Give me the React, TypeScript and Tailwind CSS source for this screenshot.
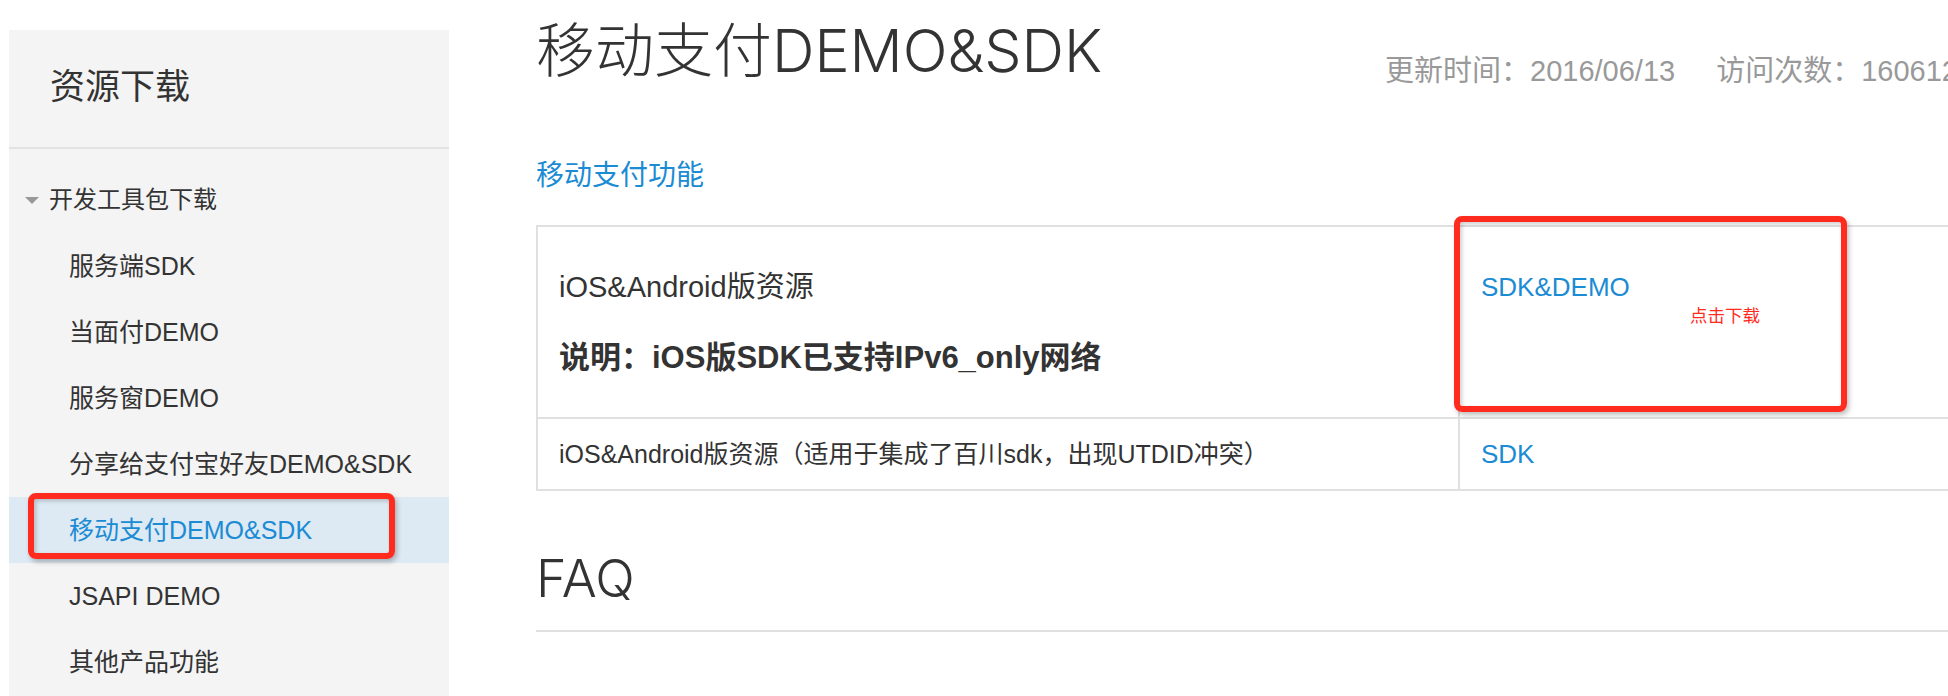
const sans = "font-['Liberation_Sans','Noto_Sans_CJK_SC',sans-serif]"
const light = "font-['Inter','Noto_Sans_CJK_SC',sans-serif] font-light"
const redBox = "absolute border-[6px] border-[#ff2b1e] rounded-[8px] shadow-[2px_3px_5px_rgba(0,0,0,0.25),inset_2px_2px_4px_rgba(0,0,0,0.2)]"

const items = [
    "服务端SDK",
    "当面付DEMO",
    "服务窗DEMO",
    "分享给支付宝好友DEMO&SDK",
    "移动支付DEMO&SDK",
    "JSAPI DEMO",
    "其他产品功能",
]

const Sidebar = () => {
    return (
        <aside className="ml-[9px] mt-[30px] w-[440px] shrink-0 bg-[#f4f4f4] text-[#333]">
            <div className="h-[117px] flex items-center pl-[41px] pb-[4px]">
                <h2 className="text-[35px] leading-none">资源下载</h2>
            </div>
            <div className="h-[2px] bg-[#e2e2e2]" />
            <div className="pt-[18px] pb-[40px]">
                <div className="h-[66px] flex items-center pl-[16px] gap-[6px]">
                    <span className="w-0 h-0 border-l-[7px] border-r-[7px] border-t-[7px] border-l-transparent border-r-transparent border-t-[#999]" />
                    <span className="text-[24px] leading-none ml-[4px]">开发工具包下载</span>
                </div>
                {items.map((item) => {
                    const active = item === "移动支付DEMO&SDK"
                    return (
                        <div
                            key={item}
                            className={
                                active
                                    ? "relative h-[66px] flex items-center pl-[60px] bg-[#dde9f3] text-[#1b8bd3]"
                                    : "relative h-[66px] flex items-center pl-[60px]"
                            }
                        >
                            <span className="text-[25px] leading-none whitespace-nowrap">{item}</span>
                            {active && <div className={`${redBox} left-[19px] top-[-4px] w-[367px] h-[66px]`} />}
                        </div>
                    )
                })}
            </div>
        </aside>
    )
}

const Content = () => {
    return (
        <main className="ml-[87px] flex-1 min-w-0">
            <div className="flex items-start mt-[21px]">
                <h1 className={`${light} w-[849px] shrink-0 text-[59px] leading-none text-[#333] whitespace-nowrap`}>移动支付DEMO&amp;SDK</h1>
                <div className="mt-[36px] flex gap-[41px] text-[29px] leading-none text-[#999] whitespace-nowrap">
                    <span>更新时间：2016/06/13</span>
                    <span>访问次数：160612</span>
                </div>
            </div>

            <a className="block mt-[76px] text-[28px] leading-none text-[#1b8bd3]">移动支付功能</a>

            <div className="mt-[35px] w-[1500px] border-2 border-[#e0e0e0] text-[#333]">
                <div className="flex h-[190px]">
                    <div className="w-[920px] shrink-0 pl-[21px] flex flex-col justify-center gap-[35px]">
                        <p className="text-[29px] leading-[35px] whitespace-nowrap">iOS&amp;Android版资源</p>
                        <p className="text-[31px] leading-[35px] font-bold whitespace-nowrap">说明：iOS版SDK已支持IPv6_only网络</p>
                    </div>
                    <div className="relative flex-1 border-l-2 border-[#e0e0e0] pl-[21px] pt-[45px]">
                        <a className="block text-[26px] leading-[30px] text-[#1b8bd3]">SDK&amp;DEMO</a>
                        <p className="ml-[209px] mt-[4px] text-[17.5px] leading-[20px] text-[#ff2b1e]">点击下载</p>
                        <div className={`${redBox} left-[-6px] top-[-11px] w-[393px] h-[196px]`} />
                    </div>
                </div>
                <div className="flex h-[72px] border-t-2 border-[#e0e0e0]">
                    <div className="w-[920px] shrink-0 pl-[21px] flex items-center">
                        <p className="text-[25px] leading-none whitespace-nowrap">iOS&amp;Android版资源（适用于集成了百川sdk，出现UTDID冲突）</p>
                    </div>
                    <div className="flex-1 border-l-2 border-[#e0e0e0] pl-[21px] flex items-center">
                        <a className="text-[26px] leading-none text-[#1b8bd3]">SDK</a>
                    </div>
                </div>
            </div>

            <h2 className={`${light} mt-[62px] text-[52px] leading-none text-[#333]`}>FAQ</h2>
            <div className="mt-[25px] h-[2px] w-[1500px] bg-[#e0e0e0]" />
        </main>
    )
}

const App = () => {
    return (
        <div className={`${sans} w-[1948px] h-[696px] overflow-hidden bg-white flex`}>
            <Sidebar />
            <Content />
        </div>
    )
}
export default App
